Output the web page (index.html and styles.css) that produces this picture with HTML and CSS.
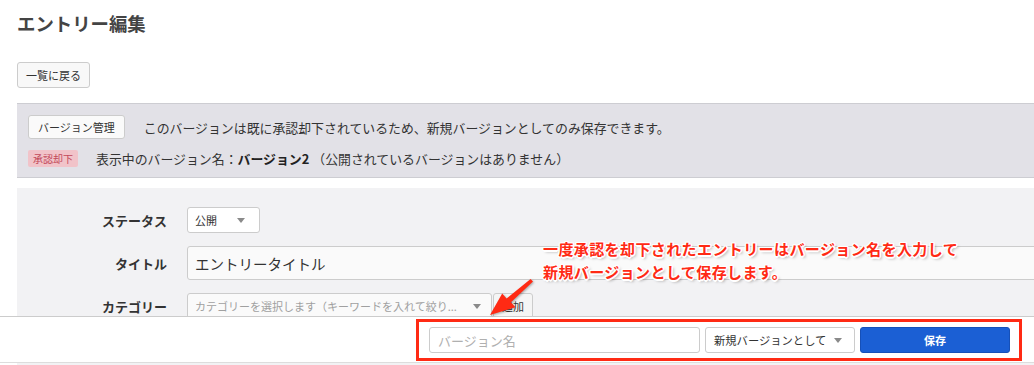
FILE: index.html
```html
<!DOCTYPE html>
<html lang="ja">
<head>
<meta charset="utf-8">
<title>エントリー編集</title>
<link rel="stylesheet" href="styles.css">
</head>
<body>
<main class="page">
  <h1 class="page-title">エントリー編集</h1>
  <div class="toolbar"><button class="btn">一覧に戻る</button></div>

  <section class="version-panel">
    <div class="vp-row">
      <button class="btn btn-version">バージョン管理</button>
      <p class="vp-text">このバージョンは既に承認却下されているため、新規バージョンとしてのみ保存できます。</p>
    </div>
    <div class="vp-row vp-row-second">
      <span class="badge">承認却下</span>
      <p class="vp-text">表示中のバージョン名：<strong>バージョン2</strong> （公開されているバージョンはありません）</p>
    </div>
  </section>

  <section class="form-panel">
    <div class="form-row">
      <label class="form-label">ステータス</label>
      <div class="field">
        <div class="select select-status"><span>公開</span><span class="caret"></span></div>
      </div>
    </div>
    <div class="form-row">
      <label class="form-label">タイトル</label>
      <div class="field">
        <div class="input input-title">エントリータイトル</div>
      </div>
    </div>
    <div class="form-row">
      <label class="form-label">カテゴリー</label>
      <div class="field field-inline">
        <div class="select select-category"><span class="placeholder">カテゴリーを選択します（キーワードを入れて絞り...</span><span class="caret"></span></div>
        <button class="btn btn-add">追加</button>
      </div>
    </div>
  </section>
</main>

<footer class="action-bar">
  <div class="action-group">
    <div class="input input-version"><span class="placeholder">バージョン名</span></div>
    <div class="select select-mode"><span>新規バージョンとして</span><span class="caret"></span></div>
    <button class="btn-save">保存</button>
  </div>
</footer>

<p class="callout">一度承認を却下されたエントリーはバージョン名を入力して<br>新規バージョンとして保存します。</p>
<svg class="callout-arrow" width="70" height="60" viewBox="0 0 70 60" aria-hidden="true">
  <polygon points="12,50 37.4,42.2 33,37.2 55,16.6 52.6,14 28.6,33.6 24.2,28.6" fill="#ff2a14"/>
</svg>
</body>
</html>
```

FILE: styles.css
```css
html, body {
  margin: 0;
  padding: 0;
  background: #ffffff;
  overflow: hidden;
}

body {
  font-family: "Noto Sans CJK JP", "Noto Sans", sans-serif;
  color: #333333;
  height: 365px;
}

.page {
  padding-left: 17px;
  height: 365px;
  overflow: hidden;
}

.page-title {
  margin: 10px 0 0;
  font-size: 18.4px;
  line-height: 27px;
  font-weight: bold;
  color: #444444;
}

.toolbar {
  margin-top: 25px;
  display: flex;
}

.btn {
  font-family: inherit;
  height: 26px;
  padding: 0 8px;
  font-size: 11px;
  line-height: 24px;
  color: #333333;
  background: #f8f8f8;
  border: 1px solid #cccccc;
  border-radius: 3px;
}

.version-panel {
  margin-top: 15px;
  background: #e2e1e7;
  border-top: 1px solid #cdcdd2;
  border-bottom: 1px solid #cdcdd2;
  padding: 11px 11px 10px;
}

.vp-row {
  display: flex;
  align-items: center;
  gap: 19px;
  height: 24px;
}

.vp-row-second {
  margin-top: 11px;
  height: 17px;
  gap: 18px;
}

.btn-version {
  height: 24px;
  line-height: 22px;
  padding: 0 9px;
  background: #fafafa;
}

.vp-text {
  margin: 0;
  font-size: 12.9px;
  line-height: 17px;
  color: #333333;
  white-space: nowrap;
}

.vp-text strong {
  font-weight: bold;
  color: #222222;
}

.badge {
  display: inline-flex;
  align-items: center;
  height: 17px;
  padding: 0 5px;
  font-size: 10px;
  background: #f1c3c9;
  color: #c2495a;
  border-radius: 2px;
}

.form-panel {
  margin-top: 10px;
  background: #f2f2f4;
  padding-top: 19px;
  height: 158px;
  display: flex;
  flex-direction: column;
  gap: 13px;
  overflow: hidden;
}

.form-row {
  display: grid;
  grid-template-columns: 150px 1fr;
  column-gap: 20px;
  align-items: center;
}

.form-label {
  text-align: right;
  font-size: 13px;
  font-weight: bold;
  color: #333333;
}

.field {
  display: flex;
}

.field-inline {
  gap: 1px;
}

.select {
  box-sizing: border-box;
  height: 26px;
  display: flex;
  align-items: center;
  justify-content: space-between;
  background: #ffffff;
  border: 1px solid #cccccc;
  border-radius: 3px;
  font-size: 11px;
  color: #333333;
  white-space: nowrap;
}

.caret {
  flex: none;
  width: 0;
  height: 0;
  border-left: 4px solid transparent;
  border-right: 4px solid transparent;
  border-top: 5px solid #8a8a8a;
}

.select-status {
  width: 73px;
  padding: 0 14px 0 7px;
}

.input {
  box-sizing: border-box;
  display: flex;
  align-items: center;
  background: #fafafa;
  border: 1px solid #cccccc;
  border-radius: 3px;
}

.input-title {
  flex: 1;
  margin-right: -6px;
  height: 34px;
  padding-left: 7px;
  font-size: 14.5px;
  color: #333333;
}

.select-category {
  width: 305px;
  padding: 0 10px 0 7px;
  background: #fafafa;
}

.placeholder {
  color: #a0a0a0;
}

.btn-add {
  height: 26px;
  padding: 0 8px;
  background: #f5f5f5;
}

.action-bar {
  position: fixed;
  left: 0;
  right: 0;
  bottom: 2px;
  height: 47px;
  box-sizing: border-box;
  background: #ffffff;
  border-top: 1px solid #cccccc;
  border-bottom: 1px solid #dddddd;
  display: flex;
  justify-content: flex-end;
  align-items: flex-start;
  padding: 2px 12px 0 0;
}

.action-group {
  display: flex;
  align-items: center;
  gap: 5px;
  border: 3px solid #ff2a14;
  padding: 5px 9px 5px 10px;
}

.input-version {
  width: 271px;
  height: 26px;
  padding-left: 8px;
  background: #ffffff;
  font-size: 13px;
}

.input-version .placeholder {
  color: #b0b0b0;
}

.select-mode {
  width: 150px;
  padding: 0 12px 0 8px;
  font-size: 11.3px;
}

.btn-save {
  font-family: inherit;
  width: 150px;
  height: 26px;
  background: #1b5fd4;
  border: 1px solid #1650b8;
  border-radius: 3px;
  color: #ffffff;
  font-size: 11px;
  font-weight: bold;
}

.callout {
  position: absolute;
  left: 543px;
  top: 237px;
  margin: 0;
  font-size: 15px;
  line-height: 23px;
  font-weight: bold;
  color: #ff2a14;
  letter-spacing: 0.4px;
  text-shadow:
    1.5px 0 0 #fff, -1.5px 0 0 #fff, 0 1.5px 0 #fff, 0 -1.5px 0 #fff,
    1px 1px 0 #fff, -1px -1px 0 #fff, 1px -1px 0 #fff, -1px 1px 0 #fff,
    2px 2px 3px rgba(0, 0, 0, 0.35);
}

.callout-arrow {
  position: absolute;
  left: 478px;
  top: 265px;
  filter: drop-shadow(1px 1px 1px rgba(0, 0, 0, 0.3));
}
```
